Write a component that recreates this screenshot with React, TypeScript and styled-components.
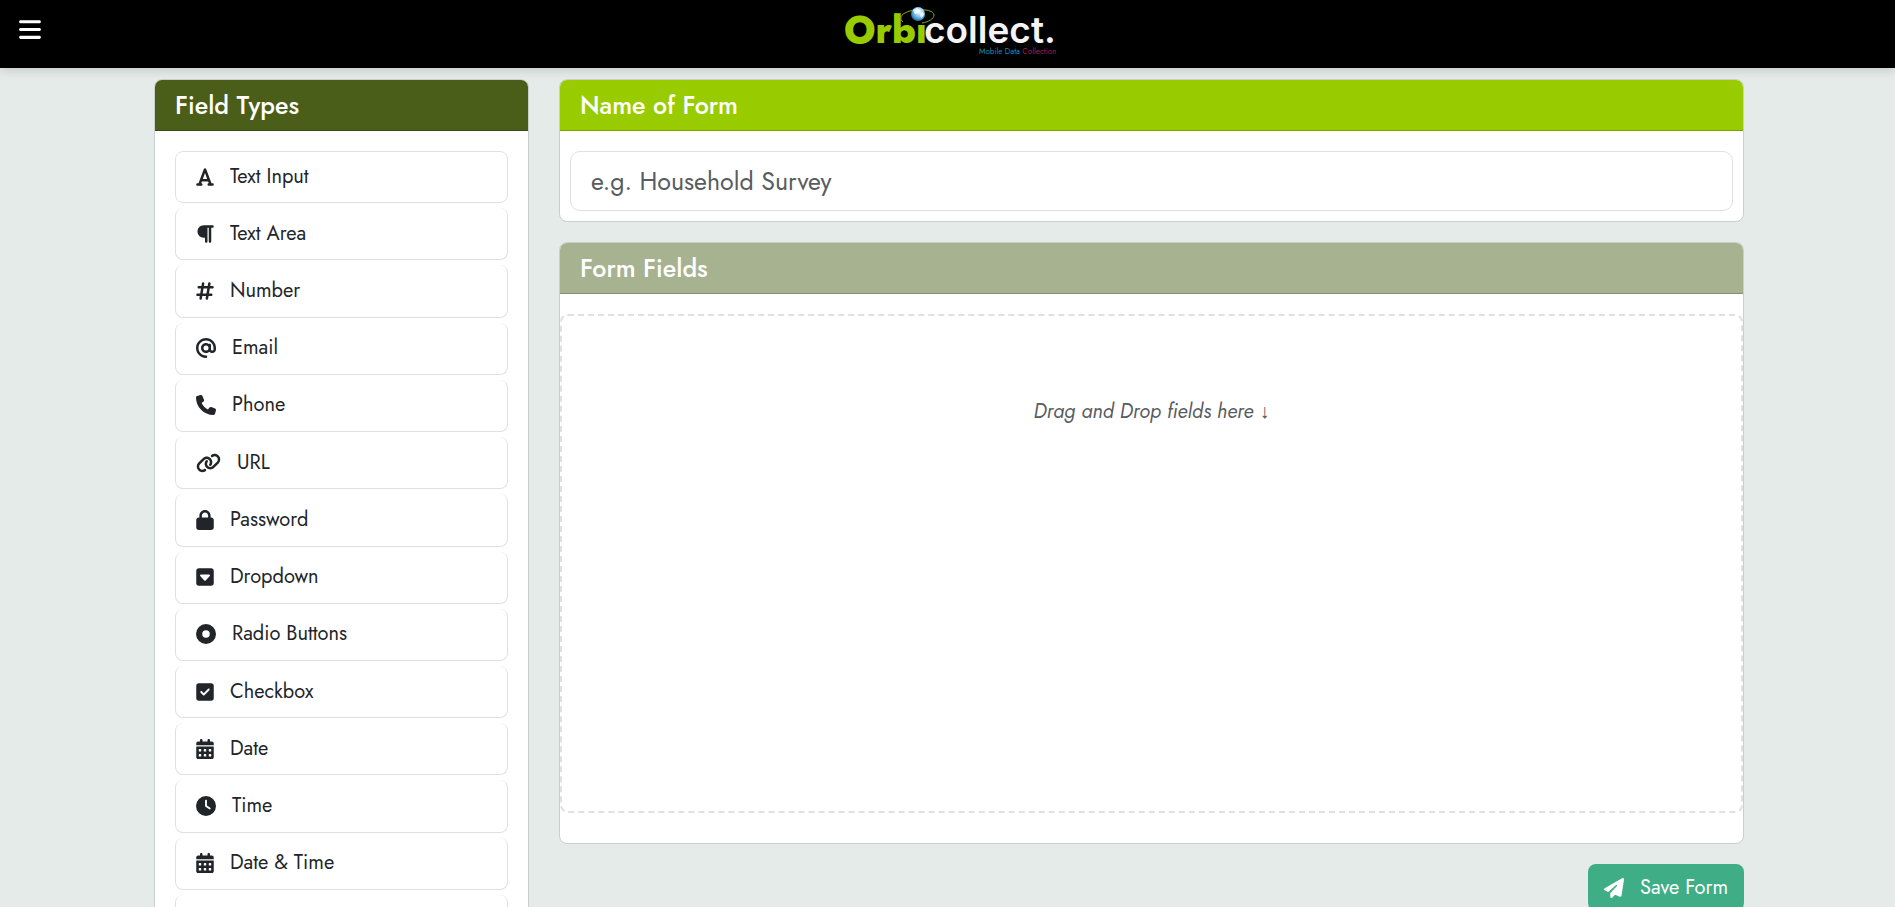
import React from 'react';
import styled, { createGlobalStyle } from 'styled-components';
import type { IconType } from 'react-icons';
import {
  FaAt,
  FaBars,
  FaCalendarDays,
  FaCircleDot,
  FaClock,
  FaFont,
  FaHashtag,
  FaLink,
  FaLock,
  FaPaperPlane,
  FaParagraph,
  FaPhone,
  FaSquareCaretDown,
  FaSquareCheck,
  FaUpload,
} from 'react-icons/fa6';

const GlobalStyle = createGlobalStyle`
  *, *::before, *::after { box-sizing: border-box; }
  html { scrollbar-width: none; }
  body {
    margin: 0;
    background: #e4ebe8;
    color: #212529;
    font-family: Jost, Lato, sans-serif;
    font-size: 20px;
    line-height: 30px;
  }
`;

const TopBar = styled.header`
  display: grid;
  grid-template-columns: 1fr auto 1fr;
  align-items: start;
  height: 68px;
  padding: 0 15px;
  background: #000;
  box-shadow: 0 2px 10px rgba(0, 0, 0, 0.15);
`;

const MenuButton = styled.button`
  justify-self: start;
  display: flex;
  margin: 17px 0 0;
  padding: 0 4px;
  border: 0;
  background: none;
  color: #fff;
  cursor: pointer;

  svg {
    width: 22px;
    height: 25px;
  }
`;

const HomeLink = styled.a`
  display: block;
  height: 60px;
`;

const Page = styled.main`
  display: grid;
  grid-template-columns: minmax(0, 375fr) minmax(0, 1185fr);
  align-items: start;
  gap: 30px;
  max-width: 1593px;
  margin: 0 auto;
  padding: 11px 0 20px 3px;
`;

const FormColumn = styled.form`
  display: flex;
  flex-direction: column;
  gap: 20px;
`;

const Card = styled.section`
  overflow: hidden;
  border: 1px solid #c8cfcc;
  border-radius: 8px;
  background: #fff;
`;

const CardTitle = styled.h2<{ $color: string }>`
  margin: 0;
  padding: 10px 20px;
  border-bottom: 1px solid rgba(0, 0, 0, 0.2);
  background: ${({ $color }) => $color};
  color: #fff;
  font-size: 25px;
  font-weight: 500;
  line-height: 30px;
`;

const CardBody = styled.div<{ $padding: string }>`
  padding: ${({ $padding }) => $padding};
`;

const FieldList = styled.ul`
  display: grid;
  grid-auto-rows: 1fr;
  gap: 5px;
  min-height: 796px;
  margin: 0;
  padding: 0;
  list-style: none;
`;

const FieldItem = styled.li<{ $iconWidth: number }>`
  display: flex;
  align-items: center;
  gap: 16px;
  padding: 10px 20px;
  border: 1px solid #dee0e2;
  border-top-width: 0;
  border-radius: 8px;
  cursor: grab;

  &:first-child {
    border-top-width: 1px;
  }

  svg {
    flex: none;
    width: ${({ $iconWidth }) => $iconWidth}px;
    height: 20px;
  }
`;

const NameInput = styled.input`
  display: block;
  width: 100%;
  height: 60px;
  padding: 0 20px;
  border: 1px solid #dee0e2;
  border-radius: 10px;
  background: #fff;
  color: #212529;
  font: inherit;
  font-size: 25px;

  &::placeholder {
    color: #595c5f;
    opacity: 1;
  }
`;

const DropZone = styled.div`
  min-height: 499px;
  padding: 80px 20px;
  border: 2px dashed #dee0e2;
  border-radius: 8px;
  color: #595c5f;
  font-style: italic;
  text-align: center;
`;

const DropHint = styled.p`
  margin: 0;
`;

const DownArrow = styled.span`
  font-family: 'Liberation Serif', serif;
  font-style: normal;
`;

const SaveButton = styled.button`
  align-self: flex-end;
  display: flex;
  align-items: center;
  gap: 16px;
  height: 47px;
  padding: 0 16px;
  border: 0;
  border-radius: 8px;
  background: #3fad85;
  color: #fff;
  font: inherit;
  cursor: pointer;

  svg {
    width: 20px;
    height: 20px;
  }
`;

const fieldTypes: { label: string; Icon: IconType; iconWidth: number }[] = [
  { label: 'Text Input', Icon: FaFont, iconWidth: 18 },
  { label: 'Text Area', Icon: FaParagraph, iconWidth: 18 },
  { label: 'Number', Icon: FaHashtag, iconWidth: 18 },
  { label: 'Email', Icon: FaAt, iconWidth: 20 },
  { label: 'Phone', Icon: FaPhone, iconWidth: 20 },
  { label: 'URL', Icon: FaLink, iconWidth: 25 },
  { label: 'Password', Icon: FaLock, iconWidth: 18 },
  { label: 'Dropdown', Icon: FaSquareCaretDown, iconWidth: 18 },
  { label: 'Radio Buttons', Icon: FaCircleDot, iconWidth: 20 },
  { label: 'Checkbox', Icon: FaSquareCheck, iconWidth: 18 },
  { label: 'Date', Icon: FaCalendarDays, iconWidth: 18 },
  { label: 'Time', Icon: FaClock, iconWidth: 20 },
  { label: 'Date & Time', Icon: FaCalendarDays, iconWidth: 18 },
  { label: 'File Upload', Icon: FaUpload, iconWidth: 20 },
];

function Logo() {
  return (
    <svg width="216" height="60" viewBox="0 0 216 60" role="img" aria-label="Orbicollect. Mobile Data Collection">
      <defs>
        <radialGradient id="globe" cx="0.6" cy="0.35" r="0.7">
          <stop offset="0" stopColor="#ffffff" />
          <stop offset="0.45" stopColor="#8fcdf0" />
          <stop offset="1" stopColor="#1565a5" />
        </radialGradient>
      </defs>
      <text x="4" y="43" fontFamily="Jost, Lato, sans-serif" fontSize="38" fontWeight="800" fill="#99cc00">Orbı</text>
      <text x="84" y="43" fontFamily="Inter, Lato, sans-serif" fontSize="37" fontWeight="600" fill="#f4f4f4">collect.</text>
      <path d="M63 22C57 17 64 11 76 10c10-1 18 1 18 5 0 4-6 7-12 8" fill="none" stroke="#7fae12" strokeWidth="1" />
      <circle cx="78" cy="14" r="7" fill="url(#globe)" />
      <path d="M73 10l4-2 3 2-2 3-3 1zM80 14l3-2 1 3-3 3z" fill="#fff" opacity="0.8" />
      <text x="139" y="54" fontFamily="Jost, Lato, sans-serif" fontSize="8" fill="#1c8fae">
        Mobile Data <tspan fill="#b01850">Collection</tspan>
      </text>
    </svg>
  );
}

export default function App() {
  return (
    <>
      <GlobalStyle />
      <TopBar>
        <MenuButton type="button" aria-label="Open menu">
          <FaBars />
        </MenuButton>
        <HomeLink href="#">
          <Logo />
        </HomeLink>
      </TopBar>
      <Page>
        <Card>
          <CardTitle $color="#4a5d19">Field Types</CardTitle>
          <CardBody $padding="20px">
            <FieldList>
              {fieldTypes.map(({ label, Icon, iconWidth }) => (
                <FieldItem key={label} $iconWidth={iconWidth} draggable>
                  <Icon aria-hidden />
                  <span>{label}</span>
                </FieldItem>
              ))}
            </FieldList>
          </CardBody>
        </Card>
        <FormColumn onSubmit={(event) => event.preventDefault()}>
          <Card>
            <CardTitle $color="#99cc00">
              <label htmlFor="form-name">Name of Form</label>
            </CardTitle>
            <CardBody $padding="20px 10px 10px">
              <NameInput id="form-name" type="text" placeholder="e.g. Household Survey" />
            </CardBody>
          </Card>
          <Card>
            <CardTitle $color="#a7b291">Form Fields</CardTitle>
            <CardBody $padding="20px 0 30px">
              <DropZone>
                <DropHint>
                  Drag and Drop fields here <DownArrow>↓</DownArrow>
                </DropHint>
              </DropZone>
            </CardBody>
          </Card>
          <SaveButton type="submit">
            <FaPaperPlane aria-hidden />
            <span>Save Form</span>
          </SaveButton>
        </FormColumn>
      </Page>
    </>
  );
}
